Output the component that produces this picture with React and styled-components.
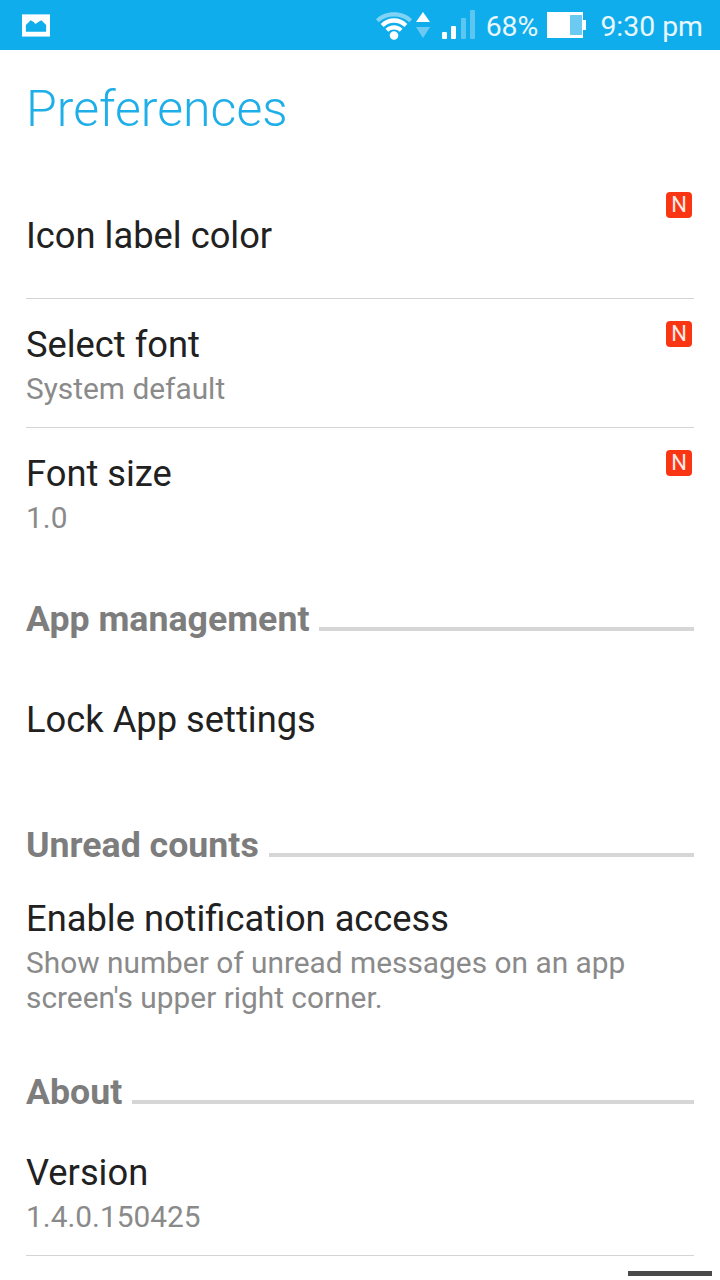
import React from "react";
import styled, { createGlobalStyle } from "styled-components";

const Global = createGlobalStyle`
  html, body { margin: 0; padding: 0; background: #fff; }
  body { font-family: Roboto, "Liberation Sans", sans-serif; }
`;
const Page = styled.div`
  position: relative; width: 720px; height: 1280px; overflow: hidden; background: #fff;
`;
const StatusBar = styled.header`
  height: 50px; background: #10adec; display: flex; align-items: center; padding: 0 17px 0 22px; color: #e8f7fd;
  font-size: 28.4px; box-sizing: border-box;
`;
const Spacer = styled.div` flex: 1; `;
const StatusText = styled.span` margin-left: ${p => p.$ml}px; padding-top: 3px; line-height: 47px; `;
const Svg = styled.svg` display: block; flex: none; margin-left: ${p => p.$ml || 0}px; `;
const Title = styled.h1`
  margin: 0; height: 125px; padding: 27px 26px 0; box-sizing: border-box;
  font-size: 50px; line-height: 64px; font-weight: 300; color: #1eaee8;
`;
const Content = styled.main` padding: 0 26px; `;
const Row = styled.section`
  position: relative; height: ${p => p.$h}px; box-sizing: border-box; padding-top: ${p => p.$pt}px;
  ${p => p.$line && "border-bottom: 1px solid #d4d4d4;"}
`;
const Label = styled.div` font-size: 36.3px; line-height: 44px; color: #212121; `;
const Sub = styled.div` font-size: 29.85px; line-height: 35px; color: #8a8a8a; margin-top: ${p => p.$mt || 0}px; `;
const Badge = styled.span`
  position: absolute; right: 2px; top: ${p => p.$top}px; width: 26px; height: 26px; border-radius: 4px; background: #fa3514;
  color: #fbe9e5; font-size: 22px; line-height: 26px; text-align: center;
`;
const Section = styled.div`
  display: flex; align-items: center; gap: 10px; height: 62px;
`;
const SectionTitle = styled.span` font-size: 35.7px; font-weight: 700; color: #7d7d7d; line-height: 40px; `;
const SectionLine = styled.span` flex: 1; height: 4px; background: #d6d6d6; margin-top: 20px; `;
const Scroll = styled.div` position: absolute; left: 628px; top: 1271px; width: 84px; height: 5px; background: #4a4a4a; `;

export default function App() {
  return (
    <Page>
      <Global />
      <StatusBar>
        <Svg width="28" height="24" viewBox="0 0 29 24">
          <path d="M0 1h29v23H0z" fill="#fff" />
          <path d="M4 19v-7l5-5 3 2 2 2 3-2 3-2 5 5v7z" fill="#10adec" />
        </Svg>
        <Spacer />
        <Svg width="38" height="34" viewBox="0 0 40 34">
          <path d="M1 11C10 1 30 1 39 11l-3 3C28 6 12 6 4 14z" fill="#7fd3f5" />
          <path d="M6 16C13 8 27 8 34 16l-3 3C25 13 15 13 9 19z" fill="#fff" />
          <path d="M11 21c5-5 13-5 18 0l-3 3c-3-3-9-3-12 0z" fill="#fff" />
          <circle cx="20" cy="28" r="4.5" fill="#fff" />
        </Svg>
        <Svg $ml={3} width="14" height="28" viewBox="0 0 14 28">
          <path d="M7 1L14 11H0z" fill="#fff" />
          <path d="M7 27L0 16h14z" fill="#6cc9f2" />
        </Svg>
        <Svg $ml={12} width="33" height="30" viewBox="0 0 33 30">
          <rect x="0" y="22" width="5" height="7" rx="1" fill="#fff" />
          <rect x="9" y="16" width="5" height="13" rx="1" fill="#fff" />
          <rect x="19" y="8" width="5" height="21" rx="1" fill="#5cc5f0" />
          <rect x="28" y="0" width="5" height="29" rx="1" fill="#5cc5f0" />
        </Svg>
        <StatusText $ml={11}>68%</StatusText>
        <Svg $ml={9} width="39" height="26" viewBox="0 0 39 26">
          <rect x="0" y="0" width="36" height="26" fill="#fff" />
          <rect x="23" y="3" width="12" height="20" fill="#6cc9f2" />
          <rect x="36" y="8" width="3" height="10" fill="#fff" />
        </Svg>
        <StatusText $ml={14}>9:30 pm</StatusText>
      </StatusBar>
      <Title>Preferences</Title>
      <Content>
        <Row $h={124} $pt={39} $line>
          <Label>Icon label color</Label>
          <Badge $top={17}>N</Badge>
        </Row>
        <Row $h={129} $pt={24} $line>
          <Label>Select font</Label>
          <Sub $mt={4}>System default</Sub>
          <Badge $top={22}>N</Badge>
        </Row>
        <Row $h={160} $pt={24}>
          <Label>Font size</Label>
          <Sub $mt={4}>1.0</Sub>
          <Badge $top={22}>N</Badge>
        </Row>
        <Section><SectionTitle>App management</SectionTitle><SectionLine /></Section>
        <Row $h={164} $pt={48}><Label>Lock App settings</Label></Row>
        <Section><SectionTitle>Unread counts</SectionTitle><SectionLine /></Section>
        <Row $h={185} $pt={21}>
          <Label>Enable notification access</Label>
          <Sub $mt={4}>Show number of unread messages on an app<br />screen's upper right corner.</Sub>
        </Row>
        <Section><SectionTitle>About</SectionTitle><SectionLine /></Section>
        <Row $h={133} $pt={28} $line>
          <Label>Version</Label>
          <Sub $mt={4}>1.4.0.150425</Sub>
        </Row>
      </Content>
      <Scroll />
    </Page>
  );
}
